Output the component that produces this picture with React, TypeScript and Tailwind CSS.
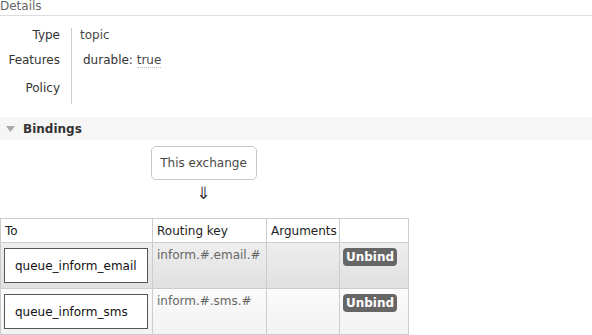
import React from "react";

export default function App() {
  const font = { fontFamily: '"DejaVu Sans", Verdana, sans-serif' };
  return (
    <div className="w-[592px] h-[335px] overflow-hidden bg-white text-[12px] text-[#484848]" style={font}>
      <div className="h-[16px] border-b border-[#dddddd] overflow-hidden">
        <div className="leading-[12px] mt-0 text-[#666666]">Details</div>
      </div>
      <div className="flex mt-[12px] h-[76px]">
        <div className="w-[72px] pr-[11px] border-r border-[#cccccc] text-right text-[#333333]">
          <div className="h-[17px] -mt-[2px]">Type</div>
          <div className="h-[26px] pt-[8px]">Features</div>
          <div className="h-[27px] pt-[10px]">Policy</div>
        </div>
        <div className="pl-[8px]">
          <div className="h-[17px] -mt-[2px]">topic</div>
          <div className="h-[26px] pt-[8px] pl-[3px] text-[#333333]">
            durable: <span className="text-[#484848] border-b border-dotted border-[#bbbbbb]">true</span>
          </div>
        </div>
      </div>
      <div className="mt-[13px] h-[23px] bg-[#f6f6f6] flex items-center">
        <svg width="9" height="6" viewBox="0 0 9 6" className="ml-[6px]">
          <path d="M0 0 L9 0 L4.5 6 Z" fill="#aaaaaa" />
        </svg>
        <span className="ml-[8px] font-bold text-[#333333]">Bindings</span>
      </div>
      <div className="flex flex-col items-center w-[407px] mt-[6px]">
        <div className="w-[106px] h-[34px] border border-[#c8c8c8] rounded-[5px] flex items-center justify-center text-[#484848]">
          This exchange
        </div>
        <div className="h-[38px] leading-[20px] pt-[3px] text-[17px] text-[#333333]">⇓</div>
      </div>
      <table className="border-collapse table-fixed w-[408px] text-[12px]">
        <colgroup>
          <col className="w-[152px]" />
          <col className="w-[114px]" />
          <col className="w-[73px]" />
          <col className="w-[69px]" />
        </colgroup>
        <thead>
          <tr className="h-[24px] text-[#222222]">
            <th className="border border-[#cccccc] text-left font-normal px-[4px]">To</th>
            <th className="border border-[#cccccc] text-left font-normal px-[4px]">Routing key</th>
            <th className="border border-[#cccccc] text-left font-normal px-[4px]">Arguments</th>
            <th className="border border-[#cccccc]"></th>
          </tr>
        </thead>
        <tbody>
          {[
            { q: "queue_inform_email", k: "inform.#.email.#", bg: "bg-[linear-gradient(#eeeeee,#e0e0e0)]" },
            { q: "queue_inform_sms", k: "inform.#.sms.#", bg: "bg-[linear-gradient(#fbfbfb,#f2f2f2)]" },
          ].map((r) => (
            <tr key={r.q} className={`h-[46px] ${r.bg}`}>
              <td className="border border-[#cccccc] px-[3px] align-middle">
                <div className="w-[144px] h-[35px] border border-[#555555] bg-white flex items-center pl-[10px] text-[#111111]">
                  {r.q}
                </div>
              </td>
              <td className="border border-[#cccccc] px-[4px] pt-[3px] align-top text-[#666666]">{r.k}</td>
              <td className="border border-[#cccccc]"></td>
              <td className="border border-[#cccccc] align-top pt-[5px] px-[3px]">
                <span className="inline-flex items-center justify-center w-[54px] h-[18px] rounded-[4px] bg-[#666666] text-white font-bold">
                  Unbind
                </span>
              </td>
            </tr>
          ))}
        </tbody>
      </table>
    </div>
  );
}
